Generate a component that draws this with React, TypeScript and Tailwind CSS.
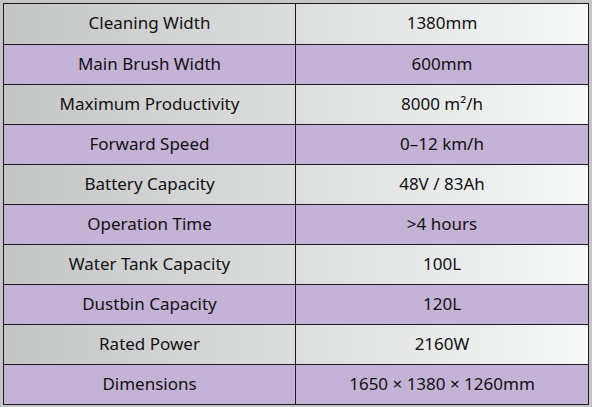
import React from "react";

const rows: [string, string][] = [
  ["Cleaning Width", "1380mm"],
  ["Main Brush Width", "600mm"],
  ["Maximum Productivity", "8000 m²/h"],
  ["Forward Speed", "0–12 km/h"],
  ["Battery Capacity", "48V / 83Ah"],
  ["Operation Time", ">4 hours"],
  ["Water Tank Capacity", "100L"],
  ["Dustbin Capacity", "120L"],
  ["Rated Power", "2160W"],
  ["Dimensions", "1650 × 1380 × 1260mm"],
];

export default function App() {
  return (
    <div className="w-[592px] h-[407px] bg-[#c3c5c6] pt-[3px] pl-[3px]" style={{ fontFamily: '"Noto Sans", sans-serif' }}>
      <div className="w-[586px] border-[1.5px] border-[#1c1c1c] flex flex-col">
        {rows.map(([k, v], i) => (
          <div
            key={k}
            className={
              "grid grid-cols-[292px_1fr] h-[40px] text-[17px] font-normal leading-none text-[#111111] " +
              (i > 0 ? "border-t border-[#1c1c1c] " : "") +
              (i % 2 === 0
                ? "bg-gradient-to-r from-[#c4c6c6] to-[#f5f7f8]"
                : "bg-[#c4b3d6]")
            }
          >
            <div className="flex items-center justify-center border-r border-[#1c1c1c] pb-[3px]">{k}</div>
            <div className="flex items-center justify-center pb-[3px]">{v}</div>
          </div>
        ))}
      </div>
    </div>
  );
}
